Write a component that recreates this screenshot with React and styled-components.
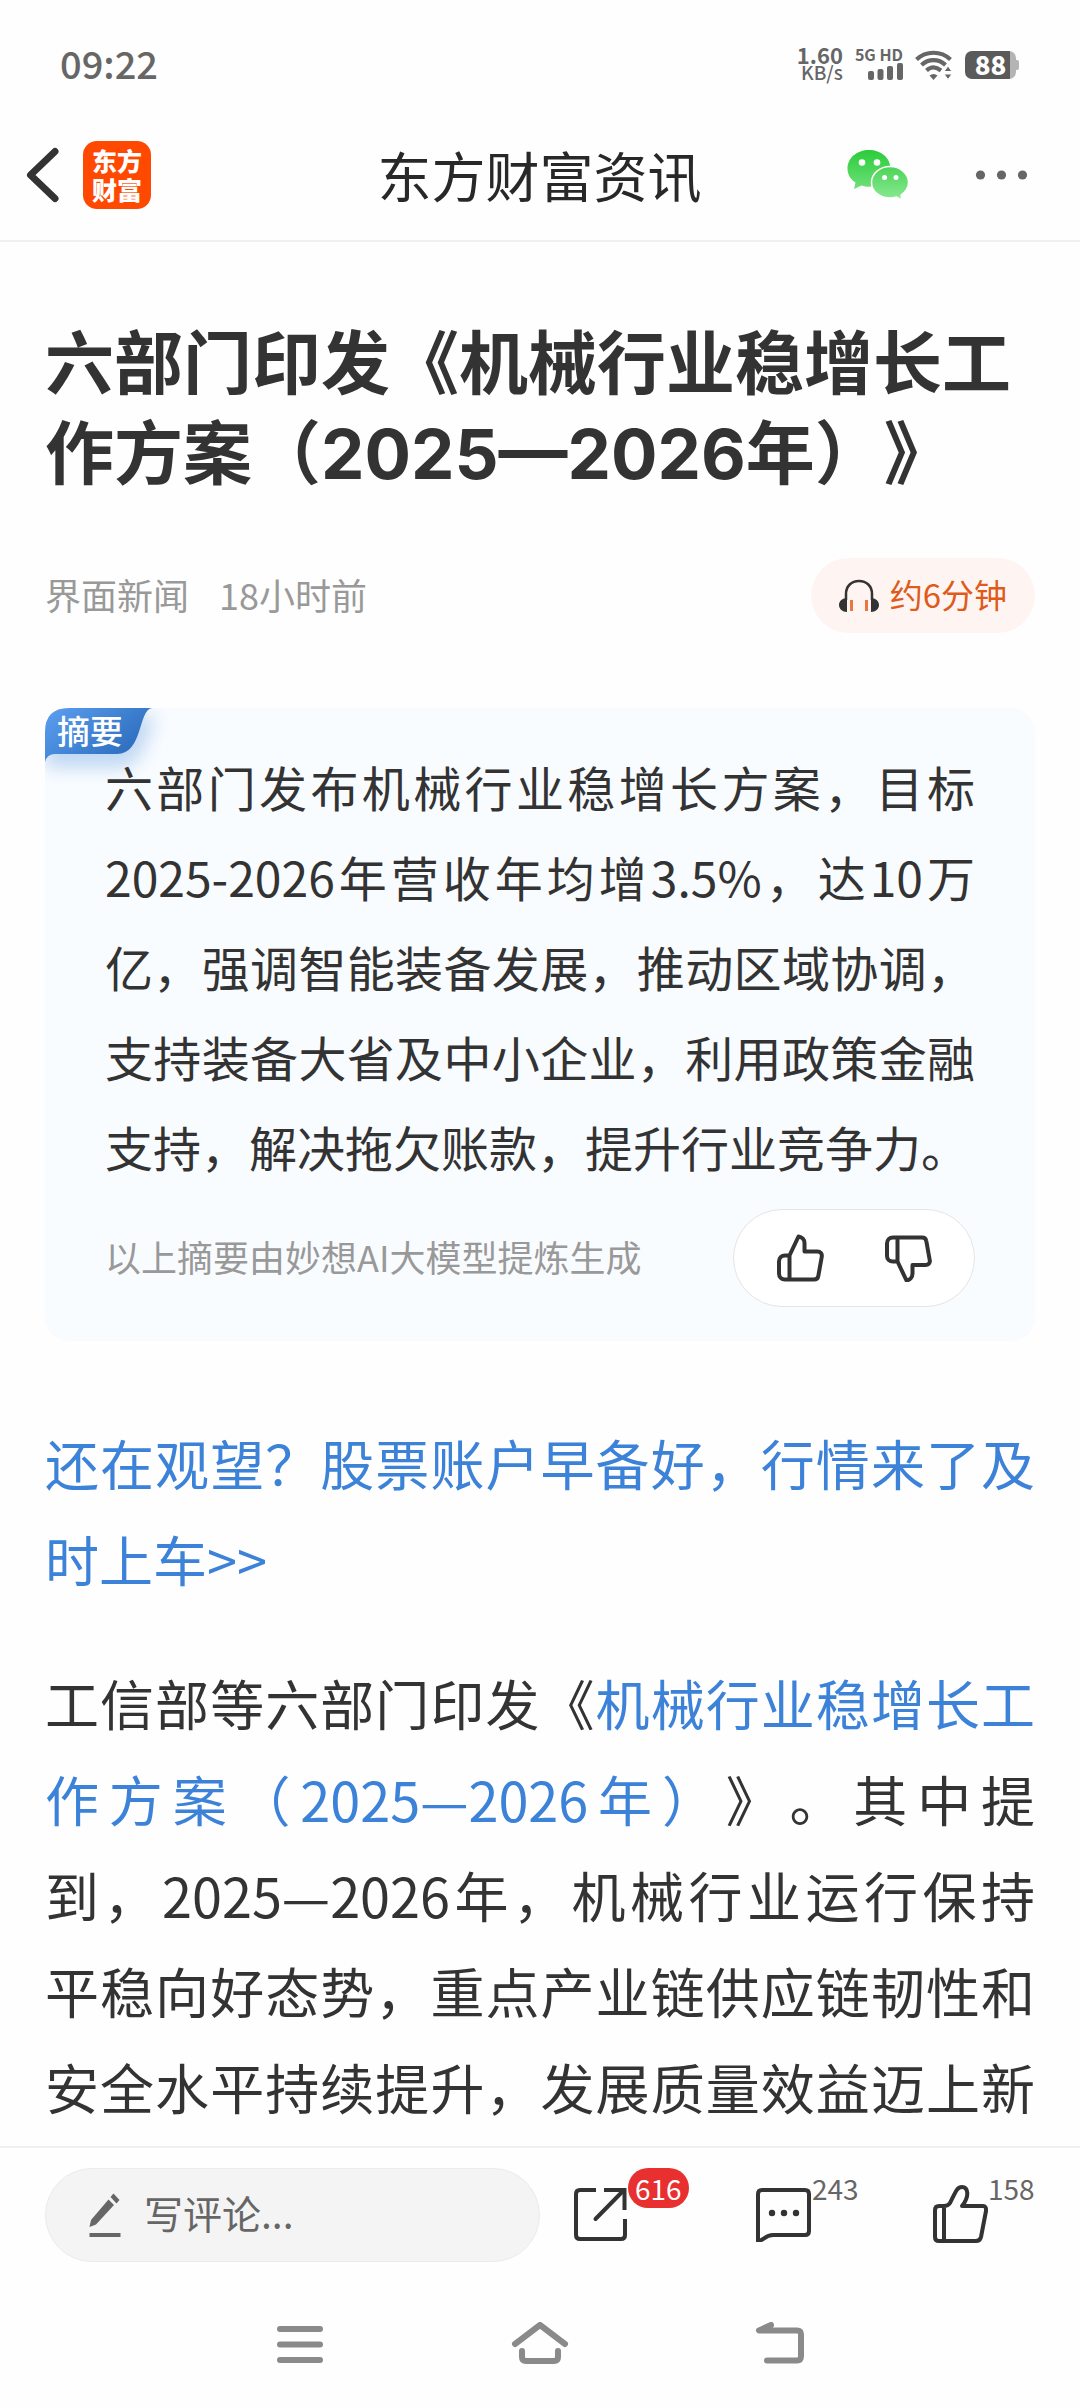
import React from "react";
import styled, { createGlobalStyle } from "styled-components";

const GlobalStyle = createGlobalStyle`
  * { box-sizing: border-box; }
  body {
    margin: 0;
    background: #fefefe;
    color: #333;
    font-family: "Noto Sans CJK SC", "Noto Sans", sans-serif;
    text-spacing-trim: space-all;
  }
  button, input { font: inherit; color: inherit; }
  button { padding: 0; border: 0; background: none; cursor: pointer; }
  svg { display: block; flex: none; }
  h1, h2, p { margin: 0; }
`;

const Screen = styled.div`
  display: flex;
  flex-direction: column;
  min-height: 100vh;
`;

/* Status bar */

const StatusBar = styled.div`
  display: flex;
  align-items: center;
  justify-content: space-between;
  height: 109px;
  padding: 20px 61px 0 60px;
  color: #666;
`;

const Clock = styled.time`
  padding-bottom: 4px;
  font-size: 38px;
  font-weight: 500;
  line-height: 40px;
`;

const StatusGroup = styled.div`
  display: flex;
  align-items: center;
  gap: 12px;
`;

const StatusStack = styled.div`
  display: flex;
  flex-direction: column;
  align-items: flex-end;
  padding-bottom: 4px;
`;

const StatusText = styled.span`
  font-size: ${(p) => p.$size}px;
  font-weight: ${(p) => p.$weight};
  line-height: 18px;
`;

const Battery = styled.div`
  display: flex;
  align-items: center;
`;

const BatteryBody = styled.div`
  display: flex;
  align-items: center;
  justify-content: center;
  width: 51px;
  height: 28px;
  padding-bottom: 2px;
  border-radius: 7px;
  background: linear-gradient(to right, #5a5a5a 88%, #b4b4b4 88%);
  color: #fff;
  font-size: 26px;
  font-weight: 900;
  line-height: 26px;
`;

const BatteryTip = styled.div`
  width: 3px;
  height: 10px;
  border-radius: 0 2px 2px 0;
  background: #b4b4b4;
`;

/* Header */

const Header = styled.header`
  display: grid;
  grid-template-columns: 1fr auto 1fr;
  align-items: center;
  height: 133px;
  padding: 0 49px 0 24px;
  border-bottom: 2px solid #f0f0f0;
`;

const HeaderSide = styled.div`
  display: flex;
  align-items: center;
  justify-content: ${(p) => (p.$end ? "flex-end" : "flex-start")};
  gap: ${(p) => (p.$end ? 62 : 21)}px;
`;

const HeaderTitle = styled.h2`
  padding-left: 24px;
  color: #282828;
  font-size: 54px;
  font-weight: 400;
  line-height: 64px;
`;

const Logo = styled.a`
  display: grid;
  place-content: center;
  width: 68px;
  height: 68px;
  border-radius: 14px;
  background: #ff4800;
  color: #fff;
  font-size: 25px;
  font-weight: 900;
  line-height: 29px;
  text-decoration: none;
`;

/* Article */

const Article = styled.main`
  flex: 1;
  padding: 77px 45px 11px;
`;

const Title = styled.h1`
  font-family: Inter, "Noto Sans CJK SC", sans-serif;
  font-size: 69px;
  font-weight: 700;
  line-height: 90px;
`;

const Meta = styled.div`
  display: flex;
  align-items: center;
  justify-content: space-between;
  margin-top: 59px;
`;

const Byline = styled.div`
  display: flex;
  gap: 30px;
  padding-bottom: 4px;
  color: #999;
  font-size: 36px;
  line-height: 48px;
`;

const ListenButton = styled.button`
  display: flex;
  align-items: center;
  gap: 10px;
  height: 75px;
  padding: 0 28px 0 27px;
  border-radius: 38px;
  background: #fef5f2;
  color: #e05a1c;
  font-size: 33px;
  line-height: 48px;
`;

const ListenText = styled.span`
  padding-bottom: 4px;
`;

const Summary = styled.section`
  position: relative;
  margin-top: 75px;
  padding: 33px 60px 34px;
  border-radius: 24px;
  background: #f9fcff;
`;

const SummaryTag = styled.h2`
  position: absolute;
  top: 0;
  left: 0;
  isolation: isolate;
  padding: 0 12px;
  color: #fff;
  font-size: 33px;
  font-weight: 500;
  line-height: 44px;
`;

const TagShape = styled.svg`
  position: absolute;
  top: 0;
  left: 0;
  z-index: -1;
`;

const SummaryText = styled.p`
  position: relative;
  font-size: 48px;
  line-height: 90px;
  text-align: justify;
`;

const SummaryFooter = styled.div`
  display: flex;
  align-items: center;
  justify-content: space-between;
  margin-top: 18px;
`;

const SummaryNote = styled.span`
  padding-bottom: 4px;
  color: #999;
  font-size: 36px;
  line-height: 48px;
`;

const Votes = styled.div`
  display: flex;
  align-items: center;
  justify-content: space-around;
  width: 242px;
  height: 98px;
  padding: 0 12px;
  border: 1px solid #e4e4e4;
  border-radius: 49px;
  background: #fff;
  color: #333;
`;

const Paragraph = styled.p`
  margin-top: ${(p) => p.$gap}px;
  font-size: 54px;
  line-height: 96px;
  text-align: justify;
  text-align-last: ${(p) => (p.$continues ? "justify" : "auto")};
`;

const TextLink = styled.a`
  color: #3b82d8;
  text-decoration: none;
`;

/* Bottom bars */

const Toolbar = styled.div`
  display: grid;
  grid-template-columns: minmax(0, 1fr) minmax(0, 1fr);
  padding-top: 20px;
  border-top: 2px solid #f0f0f0;
`;

const CommentField = styled.label`
  display: flex;
  align-items: center;
  gap: 22px;
  height: 94px;
  margin-left: 45px;
  padding: 0 42px;
  border: 1px solid #ebebeb;
  border-radius: 47px;
  background: #f4f4f4;
  color: #666;
`;

const CommentInput = styled.input`
  flex: 1;
  min-width: 0;
  padding: 0 0 6px;
  border: 0;
  outline: 0;
  background: none;
  font-size: 39px;
  line-height: 56px;
  &::placeholder { color: #666; opacity: 1; }
`;

const Actions = styled.div`
  display: grid;
  grid-template-columns: repeat(3, minmax(0, 1fr));
`;

const Action = styled.button`
  display: flex;
  align-items: flex-start;
  height: 94px;
  padding-left: 33px;
  svg { align-self: center; margin-bottom: 2px; }
`;

const Count = styled.span`
  color: #666;
  font-size: 28px;
  line-height: 40px;
`;

const Badge = styled(Count)`
  padding: 0 7px;
  border-radius: 20px;
  background: #e83030;
  color: #fff;
`;

const SystemNav = styled.nav`
  display: grid;
  grid-template-columns: repeat(3, 1fr);
  justify-items: center;
  align-items: center;
  height: 147px;
  padding: 16px 180px 0;
`;

/* Icons */

const Stroke = ({ w, h, sw = 4, children }) => (
  <svg width={w} height={h} viewBox={`0 0 ${w} ${h}`} fill="none" stroke="currentColor"
    strokeWidth={sw} strokeLinecap="round" strokeLinejoin="round" aria-hidden="true">
    {children}
  </svg>
);

const SignalIcon = () => (
  <svg width="35" height="17" viewBox="0 0 35 17" fill="#666" aria-hidden="true">
    <rect x="0" y="8" width="6" height="9" rx="2" />
    <rect x="9.500" y="6" width="6" height="11" rx="2" />
    <rect x="19" y="3" width="6" height="14" rx="2" />
    <rect x="29" y="0" width="6" height="17" rx="2" />
  </svg>
);

const WifiIcon = () => (
  <svg width="38" height="30" viewBox="0 0 38 30" fill="none" stroke="#666" strokeWidth="4.200" aria-hidden="true">
    <path d="M1.500 9.500C11 .5 26 .5 35.500 9.500" />
    <path d="M6.500 15C13.500 8.500 23.500 8.500 30.500 15" />
    <path d="M11.500 20.500C16 16.500 21 16.500 26 20.500" />
    <path d="M14.500 25.500Q18.500 22.500 22.500 25.500L18.500 30Z" fill="#666" stroke="none" />
    <path d="M33 16L37 21.500H29ZM33 29.500L37 24H29Z" fill="#666" stroke="#fefefe" strokeWidth="1" />
  </svg>
);

const BackIcon = () => (
  <Stroke w={38} h={62} sw={7}>
    <path d="M31 7.500L6.500 31L31 54.500" stroke="#333" />
  </Stroke>
);

const WechatIcon = () => (
  <svg width="62" height="52" viewBox="0 0 62 52" aria-hidden="true">
    <defs>
      <linearGradient id="wechat" x1="0" y1="0" x2="0" y2="1">
        <stop offset="0" stopColor="#2bcc3a" />
        <stop offset="1" stopColor="#6fe07a" />
      </linearGradient>
      <linearGradient id="wechatFront" x1="0" y1="0" x2="0" y2="1">
        <stop offset="0" stopColor="#4cd458" />
        <stop offset="1" stopColor="#8aea92" />
      </linearGradient>
    </defs>
    <path d="M22 1C10 1 .5 9 .5 19.500C.5 25.500 3.500 30.500 8.500 33.500L7 40L14.500 36.500C17 37.300 19.500 37.700 22 37.700C34 37.700 43.500 29.500 43.500 19.500C43.500 9 34 1 22 1Z" fill="url(#wechat)" />
    <circle cx="15" cy="13.500" r="3.300" fill="#fff" />
    <circle cx="30" cy="13.500" r="3.300" fill="#fff" />
    <path d="M43 17.500C33 17.500 24.500 24.500 24.500 33.500C24.500 42.500 33 49 43 49C45.500 49 47.500 48.700 49.500 48L55 51L54 46C58.500 43 61.500 38.500 61.500 33.500C61.500 24.500 53 17.500 43 17.500Z" fill="url(#wechatFront)" stroke="#fefefe" strokeWidth="1.500" />
    <circle cx="37.500" cy="28.500" r="2.500" fill="#fff" />
    <circle cx="49" cy="28.500" r="2.500" fill="#fff" />
  </svg>
);

const MoreIcon = () => (
  <svg width="60" height="30" viewBox="0 0 60 30" fill="#666" aria-hidden="true">
    <circle cx="9.500" cy="15" r="4.600" />
    <circle cx="30.500" cy="15" r="4.600" />
    <circle cx="51.500" cy="15" r="4.600" />
  </svg>
);

const HeadphoneIcon = () => (
  <svg width="42" height="34" viewBox="0 0 42 34" aria-hidden="true">
    <path d="M8 21V15C8 7 13.500 2 21 2S34 7 34 15V21" fill="none" stroke="#333" strokeWidth="2.500" />
    <path d="M9 19V33C4.500 33 1 30 1 26S4.500 19 9 19ZM33 19V33C37.500 33 41 30 41 26S37.500 19 33 19Z" fill="#333" />
    <path d="M13.500 21V32M28.500 21V32" stroke="#e87840" strokeWidth="3" />
  </svg>
);

const VoteUpIcon = () => (
  <Stroke w={48} h={48}>
    <path d="M13.500 21.500H9C5.500 21.500 3 24 3 27.500V39.500C3 43 5.500 45.500 9 45.500H38C40.500 45.500 42 44 42.300 42L45.800 22.500C46.200 20 44.500 17.500 41.500 17.500H28.500V9C28.500 5.500 26 3 22.500 2.500L13.500 21.500V45.500" />
  </Stroke>
);

const VoteDownIcon = () => (
  <Stroke w={48} h={48}>
    <path d="M13.500 27.500H9C5.500 27.500 3 25.500 3 22V9.500C3 6 5.500 3.500 9 3.500H38C40.500 3.500 42 5 42.300 7L45.800 26.500C46.200 29 44.500 31 41.500 31H28.500V39.500C28.500 43 26 46 22.500 46.500L13.500 27.500V3.500" />
  </Stroke>
);

const PencilIcon = () => (
  <svg width="34" height="46" viewBox="0 0 34 46" fill="#666" aria-hidden="true">
    <path d="M1.500 35L3 28L20.500 7.500L26 13L8 32.500Z" />
    <path d="M22.500 5L25.500 1.500L31.500 8L28.500 11.500Z" />
    <rect x="1.500" y="41" width="31" height="4" />
  </svg>
);

const ShareIcon = () => (
  <Stroke w={55} h={56}>
    <g strokeLinecap="butt">
      <path d="M23 4H7Q3 4 3 8V49Q3 53 7 53H48Q52 53 52 49V33" />
      <path d="M31 4H51.500V24" strokeLinejoin="miter" />
    </g>
    <path d="M22.500 33L50 5" />
  </Stroke>
);

const CommentIcon = () => (
  <Stroke w={59} h={56}>
    <path d="M9 4H52Q56 4 56 8V45Q56 49 52 49H20C12 49 10 55 5 55Q5 54 5 50V8Q5 4 9 4Z" />
    <g fill="currentColor" stroke="none">
      <circle cx="19" cy="27" r="3.200" />
      <circle cx="31" cy="27" r="3.200" />
      <circle cx="43" cy="27" r="3.200" />
    </g>
  </Stroke>
);

const LikeIcon = () => (
  <Stroke w={55} h={60}>
    <path d="M11 22H6Q2 22 2 26V53Q2 57 6 57H43Q47 57 48 53L53 27Q53.500 22 50 22H29C37 12 35 3 29 3C24 3 23 7 17 19Q15 22 11 22ZM11 22V57" />
  </Stroke>
);

const TagBackground = () => (
  <TagShape width="150" height="90" viewBox="0 0 150 90" aria-hidden="true">
    <defs>
      <linearGradient id="tag" x1="0" y1="0" x2="1" y2="0.600">
        <stop offset="0" stopColor="#5c9ff0" />
        <stop offset="1" stopColor="#2b6cbc" />
      </linearGradient>
      <filter id="tagShadow" x="-30%" y="-30%" width="170%" height="200%">
        <feGaussianBlur stdDeviation="9" />
      </filter>
      <clipPath id="tagClip"><path d="M0 24Q0 0 24 0H150V90H0Z" /></clipPath>
    </defs>
    <g clipPath="url(#tagClip)">
      <path d="M0 8H114C104 8 104 58 76 60H0Z" fill="#a8c8ee" opacity="0.700" filter="url(#tagShadow)" />
    </g>
    <path d="M24 0H107C93 2 98 46 72 46H10Q2 46 0 54V24Q0 0 24 0Z" fill="url(#tag)" />
  </TagShape>
);

export default function App() {
  return (
    <Screen>
      <GlobalStyle />
      <StatusBar>
        <Clock>09:22</Clock>
        <StatusGroup>
          <StatusStack>
            <StatusText $size={22} $weight={700}>1.60</StatusText>
            <StatusText $size={19} $weight={500}>KB/s</StatusText>
          </StatusStack>
          <StatusStack>
            <StatusText $size={16} $weight={700}>5G HD</StatusText>
            <SignalIcon />
          </StatusStack>
          <WifiIcon />
          <Battery>
            <BatteryBody>88</BatteryBody>
            <BatteryTip />
          </Battery>
        </StatusGroup>
      </StatusBar>

      <Header>
        <HeaderSide>
          <button aria-label="返回"><BackIcon /></button>
          <Logo href="#home">
            <span>东方</span>
            <span>财富</span>
          </Logo>
        </HeaderSide>
        <HeaderTitle>东方财富资讯</HeaderTitle>
        <HeaderSide $end>
          <button aria-label="微信分享"><WechatIcon /></button>
          <button aria-label="更多"><MoreIcon /></button>
        </HeaderSide>
      </Header>

      <Article>
        <Title>六部门印发《机械行业稳增长工作方案（2025—2026年）》</Title>
        <Meta>
          <Byline>
            <span>界面新闻</span>
            <span>18小时前</span>
          </Byline>
          <ListenButton>
            <HeadphoneIcon />
            <ListenText>约6分钟</ListenText>
          </ListenButton>
        </Meta>

        <Summary>
          <SummaryTag>
            <TagBackground />
            摘要
          </SummaryTag>
          <SummaryText>
            六部门发布机械行业稳增长方案，目标2025-2026年营收年均增3.5%，达10万亿，强调智能装备发展，推动区域协调，支持装备大省及中小企业，利用政策金融支持，解决拖欠账款，提升行业竞争力。
          </SummaryText>
          <SummaryFooter>
            <SummaryNote>以上摘要由妙想AI大模型提炼生成</SummaryNote>
            <Votes>
              <button aria-label="赞同"><VoteUpIcon /></button>
              <button aria-label="反对"><VoteDownIcon /></button>
            </Votes>
          </SummaryFooter>
        </Summary>

        <Paragraph $gap={74}>
          <TextLink href="#account">还在观望？股票账户早备好，行情来了及时上车&gt;&gt;</TextLink>
        </Paragraph>
        <Paragraph $gap={48} $continues>
          工信部等六部门印发《<TextLink href="#plan">机械行业稳增长工作方案（2025—2026年）</TextLink>》。其中提到，2025—2026年，机械行业运行保持平稳向好态势，重点产业链供应链韧性和安全水平持续提升，发展质量效益迈上新
        </Paragraph>
      </Article>

      <Toolbar>
        <CommentField>
          <PencilIcon />
          <CommentInput type="text" placeholder="写评论..." aria-label="写评论" />
        </CommentField>
        <Actions>
          <Action aria-label="分享"><ShareIcon /><Badge>616</Badge></Action>
          <Action aria-label="评论"><CommentIcon /><Count>243</Count></Action>
          <Action aria-label="点赞"><LikeIcon /><Count>158</Count></Action>
        </Actions>
      </Toolbar>

      <SystemNav>
        <button aria-label="最近任务">
          <Stroke w={46} h={44} sw={6}>
            <path d="M3 7H43M3 22.500H43M3 38H43" stroke="#8a8a8a" />
          </Stroke>
        </button>
        <button aria-label="主屏幕">
          <Stroke w={58} h={44} sw={6}>
            <path d="M4 22L29 3L54 22M11 29V35Q11 39 15 39H43Q47 39 47 35V29" stroke="#8a8a8a" />
          </Stroke>
        </button>
        <button aria-label="返回上一级">
          <Stroke w={50} h={44} sw={6}>
            <path d="M16 3L4 8.500H42Q46 8.500 46 12.500V34Q46 38.500 42 38.500H12" stroke="#8a8a8a" />
          </Stroke>
        </button>
      </SystemNav>
    </Screen>
  );
}
